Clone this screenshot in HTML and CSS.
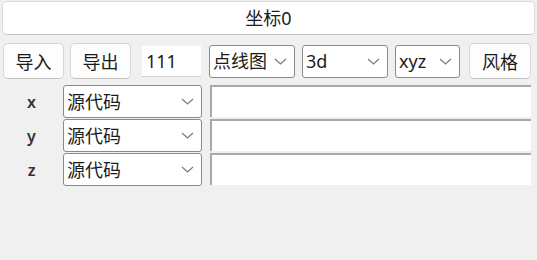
FILE: index.html
```html
<!DOCTYPE html>
<html lang="zh">
<head>
  <meta charset="UTF-8">
  <title>坐标0</title>
  <link rel="stylesheet" href="styles.css">
</head>
<body>
  <div class="panel">
    <div class="title-box">坐标0</div>

    <div class="toolbar">
      <button class="btn">导入</button>
      <button class="btn btn-export">导出</button>
      <div class="num-input">111</div>
      <div class="combo combo-type"><span>点线图</span><svg class="chev" width="13" height="7" viewBox="0 0 13 7"><path d="M1 1 L6.5 6 L12 1" fill="none" stroke="#7a7a7a" stroke-width="1.2"/></svg></div>
      <div class="combo combo-dim"><span>3d</span><svg class="chev" width="13" height="7" viewBox="0 0 13 7"><path d="M1 1 L6.5 6 L12 1" fill="none" stroke="#7a7a7a" stroke-width="1.2"/></svg></div>
      <div class="combo combo-axis"><span>xyz</span><svg class="chev" width="13" height="7" viewBox="0 0 13 7"><path d="M1 1 L6.5 6 L12 1" fill="none" stroke="#7a7a7a" stroke-width="1.2"/></svg></div>
      <button class="btn btn-style">风格</button>
    </div>

    <div class="axis-grid">
      <div class="axis-label">x</div>
      <div class="combo"><span>源代码</span><svg class="chev" width="13" height="7" viewBox="0 0 13 7"><path d="M1 1 L6.5 6 L12 1" fill="none" stroke="#7a7a7a" stroke-width="1.2"/></svg></div>
      <div class="line-edit"></div>

      <div class="axis-label">y</div>
      <div class="combo"><span>源代码</span><svg class="chev" width="13" height="7" viewBox="0 0 13 7"><path d="M1 1 L6.5 6 L12 1" fill="none" stroke="#7a7a7a" stroke-width="1.2"/></svg></div>
      <div class="line-edit"></div>

      <div class="axis-label">z</div>
      <div class="combo"><span>源代码</span><svg class="chev" width="13" height="7" viewBox="0 0 13 7"><path d="M1 1 L6.5 6 L12 1" fill="none" stroke="#7a7a7a" stroke-width="1.2"/></svg></div>
      <div class="line-edit"></div>
    </div>
  </div>
</body>
</html>
```

FILE: styles.css
```css
/* General */
body {
  margin: 0;
  background-color: #f0f0f0;
  font-family: "Noto Sans", "Noto Sans CJK SC", sans-serif;
  font-size: 18px;
  color: #1b1b1b;
  height: 260px;
}

.panel {
  padding-top: 1px;
}

.title-box {
  box-sizing: border-box;
  margin-left: 2px;
  width: 533px;
  height: 34px;
  line-height: 32px;
  background-color: #fff;
  border: 1px solid #dcdcdc;
  border-bottom-color: #c4c4c4;
  border-radius: 5px;
  text-align: center;
}

/* Toolbar */
.toolbar {
  display: flex;
  align-items: center;
  margin-top: 8px;
  padding-left: 3px;
  height: 36px;
}

.btn {
  box-sizing: border-box;
  width: 61px;
  height: 36px;
  padding: 0;
  font-family: inherit;
  font-size: 18px;
  color: #1b1b1b;
  background-color: #fdfdfd;
  border: 1px solid #d6d6d6;
  border-bottom-color: #c2c2c2;
  border-radius: 5px;
}

.btn-export {
  margin-left: 6px;
}

.btn-style {
  width: 62px;
  margin-left: 9px;
}

.num-input {
  box-sizing: border-box;
  width: 59px;
  height: 31px;
  margin-left: 11px;
  padding-left: 4px;
  line-height: 30px;
  background-color: #fff;
  border-bottom: 1px solid #cfcfcf;
}

.combo {
  box-sizing: border-box;
  display: flex;
  align-items: center;
  justify-content: space-between;
  height: 33px;
  padding: 0 7px 0 3px;
  background-color: #fff;
  border: 1px solid #8a8a8a;
  border-radius: 3px;
}

.combo span {
  line-height: 1;
}

.combo-type {
  width: 86px;
  margin-left: 8px;
}

.combo-dim {
  width: 86px;
  margin-left: 7px;
}

.combo-axis {
  width: 65px;
  margin-left: 7px;
}

.chev {
  flex-shrink: 0;
}

/* Axis rows */
.axis-grid {
  display: grid;
  grid-template-columns: 63px 139px 329px;
  grid-auto-rows: 33px;
  row-gap: 1px;
  margin-top: 6px;
}

.axis-label {
  align-self: center;
  text-align: center;
  font-size: 16px;
  font-weight: 600;
  color: #333;
}

.line-edit {
  box-sizing: border-box;
  margin-left: 8px;
  margin-bottom: 1px;
  background-color: #fff;
  border-top: 2px solid #a9a9a9;
  border-left: 2px solid #a9a9a9;
}
```
